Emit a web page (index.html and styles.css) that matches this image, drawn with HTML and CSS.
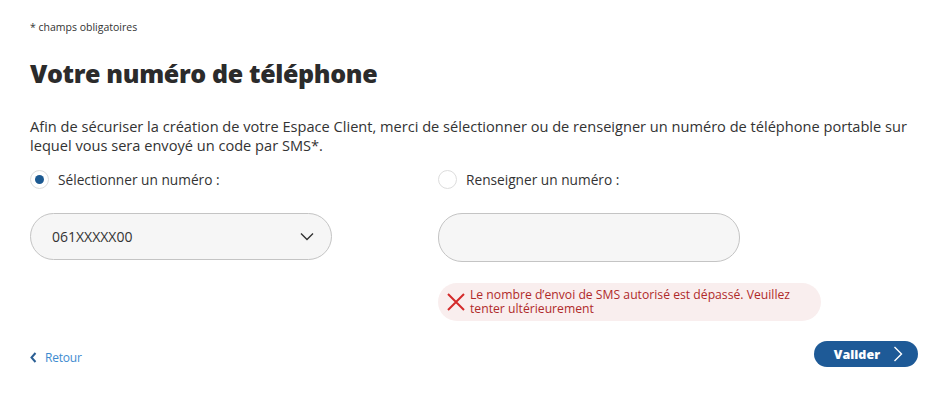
FILE: index.html
```html
<!DOCTYPE html>
<html lang="fr">
<head>
<meta charset="utf-8">
<title>Votre numéro de téléphone</title>
<link rel="stylesheet" href="styles.css">
</head>
<body>
<main class="page">
  <p class="required">* champs obligatoires</p>
  <h1 class="title">Votre numéro de téléphone</h1>
  <p class="intro">Afin de sécuriser la création de votre Espace Client, merci de sélectionner ou de renseigner un numéro de téléphone portable sur lequel vous sera envoyé un code par SMS*.</p>

  <div class="choices">
    <div class="col">
      <label class="radio">
        <span class="dot checked"></span>
        <span class="radio-label">Sélectionner un numéro :</span>
      </label>
      <div class="field select">
        <span class="value">061XXXXX00</span>
        <svg class="chev" width="14" height="9" viewBox="0 0 14 9"><path d="M1 1.5 L7 7.5 L13 1.5" fill="none" stroke="#333" stroke-width="1.4"/></svg>
      </div>
    </div>
    <div class="col">
      <label class="radio">
        <span class="dot"></span>
        <span class="radio-label">Renseigner un numéro :</span>
      </label>
      <div class="field input"></div>
      <div class="error">
        <svg class="err-x" width="20" height="20" viewBox="0 0 20 20"><path d="M2 2 L18 18 M18 2 L2 18" stroke="#d42a2a" stroke-width="2"/></svg>
        <span class="err-text">Le nombre d’envoi de SMS autorisé est dépassé. Veuillez tenter ultérieurement</span>
      </div>
    </div>
  </div>

  <div class="actions">
    <a class="back" href="#">
      <svg width="7" height="11" viewBox="0 0 7 11"><path d="M5.5 1 L1.5 5.5 L5.5 10" fill="none" stroke="#2b5f94" stroke-width="2"/></svg>
      Retour
    </a>
    <button class="submit" type="button">Valider
      <svg width="10" height="16" viewBox="0 0 10 16"><path d="M1.5 1 L8.5 8 L1.5 15" fill="none" stroke="#fff" stroke-width="1.4"/></svg>
    </button>
  </div>
</main>
</body>
</html>
```
FILE: styles.css
```css
* { box-sizing: border-box; }
html, body { margin: 0; background: #fff; }
body { font-family: "Open Sans", "Noto Sans", sans-serif; color: #333; }
.page { padding: 20px 17px 0 30px; }
.required { margin: 0; font-size: 10.5px; line-height: 14px; color: #333; }
.title { margin: 22px 0 0; font-size: 25px; line-height: 34px; font-weight: 800; color: #2b2b2b; letter-spacing: -0.35px; }
.intro { margin: 27px 0 0; font-size: 14.6px; line-height: 19px; color: #333; max-width: 882px; }
.choices { display: grid; grid-template-columns: 408px 410px; margin-top: 13px; }
.col { display: flex; flex-direction: column; align-items: flex-start; }
.radio { display: flex; align-items: center; gap: 9px; height: 22px; font-size: 13.7px; color: #333; }
.dot { width: 19px; height: 19px; border-radius: 50%; border: 1px solid #ddd; background: #fff; position: relative; }
.dot.checked::after { content: ""; position: absolute; left: 4px; top: 4px; width: 9px; height: 9px; border-radius: 50%; background: #1d5a92; }
.field { width: 302px; height: 47px; border-radius: 24px; border: 1px solid #c4c4c4; background: #f6f6f6; margin-top: 23px; }
.select { display: flex; align-items: center; justify-content: space-between; padding: 0 17px 0 21px; }
.select .value { font-size: 14px; color: #333; }
.input { height: 49px; }
.error { display: flex; align-items: center; gap: 4px; margin-top: 21px; width: 383px; min-height: 38px; padding: 3px 10px 3px 8px; background: #f9eeee; border-radius: 19px; }
.err-x { flex: none; }
.err-text { font-size: 12.2px; line-height: 14px; color: #b02a2a; }
.actions { display: flex; justify-content: space-between; align-items: center; margin-top: 20px; }
.back { display: flex; align-items: center; gap: 8px; font-size: 12px; letter-spacing: -0.2px; color: #3d8bd0; text-decoration: none; margin-top: 6px; }
.submit { display: flex; align-items: center; gap: 13px; height: 26px; padding: 0 15px 0 20px; border: 0; border-radius: 13px; background: #1e5a97; color: #fff; font-family: "Open Sans", sans-serif; font-weight: 800; font-size: 12.5px; }
```
